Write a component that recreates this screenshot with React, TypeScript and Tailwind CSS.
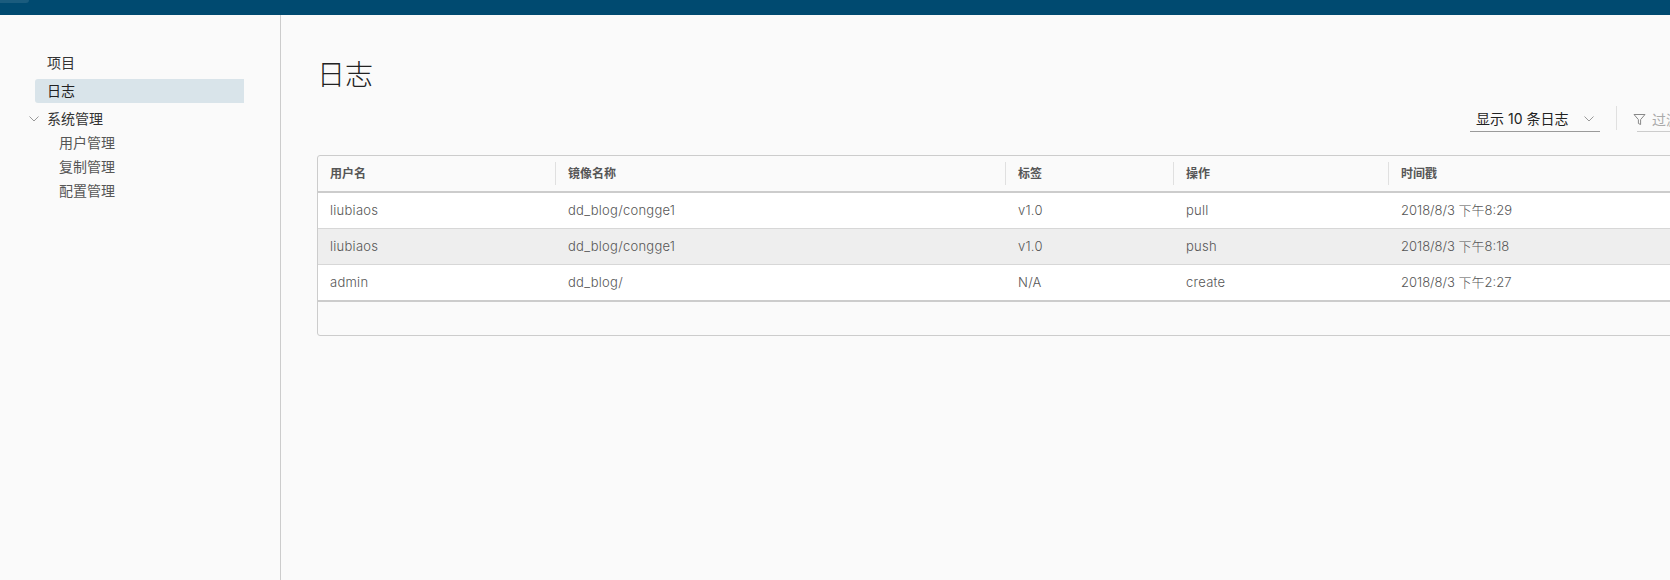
import React from "react";

const rows = [
  { u: "liubiaos", r: "dd_blog/congge1", t: "v1.0", o: "pull", d: "2018/8/3 下午8:29", bg: "bg-white" },
  { u: "liubiaos", r: "dd_blog/congge1", t: "v1.0", o: "push", d: "2018/8/3 下午8:18", bg: "bg-[#eeeeee]" },
  { u: "admin", r: "dd_blog/", t: "N/A", o: "create", d: "2018/8/3 下午2:27", bg: "bg-white" },
];
const cols = ["w-[237px]", "w-[450px]", "w-[168px]", "w-[215px]", "w-[330px]"];
const heads = ["用户名", "镜像名称", "标签", "操作", "时间戳"];

function Chevron({ className }: { className: string }) {
  return (
    <svg className={className} viewBox="0 0 12 8" fill="none" stroke="currentColor" strokeWidth="1">
      <path d="M1.5 1.5 L6 6 L10.5 1.5" />
    </svg>
  );
}

export default function App() {
  return (
    <div className="w-[1670px] h-[580px] overflow-hidden flex flex-col bg-[#fafafa] font-['Inter','Noto_Sans_CJK_SC',sans-serif] text-[#333]">
      <header className="h-[15px] shrink-0 bg-[#004a70] relative">
        <div className="absolute left-0 top-0 w-[29px] h-[3px] rounded-br-[3px] bg-[#1a5c7e]" />
      </header>
      <div className="flex flex-1 min-h-0">
        <aside className="w-[281px] shrink-0 border-r border-[#cccccc] pt-[36px] pl-[35px] text-[14px] leading-[24px]">
          <div className="pl-[12px] h-[24px] text-[#333]">项目</div>
          <div className="mt-[4px] pl-[12px] h-[24px] w-[209px] rounded-l-[3px] bg-[#d9e4ea] text-[#222]">日志</div>
          <div className="mt-[4px] relative pl-[12px] h-[24px] text-[#333]">
            系统管理
            <Chevron className="absolute left-[-7px] top-[8px] w-[12px] h-[8px] text-[#999]" />
          </div>
          <div className="pl-[24px] text-[#565656]">
            <div className="h-[24px]">用户管理</div>
            <div className="h-[24px]">复制管理</div>
            <div className="h-[24px]">配置管理</div>
          </div>
        </aside>
        <main className="flex-1 min-w-0 pl-[36px] overflow-hidden">
          <h1 className="mt-[39px] h-[42px] leading-[42px] text-[28px] font-extralight text-[#222]">日志</h1>
          <div className="mt-[10px] h-[49px] flex items-start">
            <div className="ml-[1153px] w-[130px] h-[26px] border-b border-[#9a9a9a] flex items-center pl-[6px] text-[14px] text-[#222] shrink-0">
              <span>显示 10 条日志</span>
              <Chevron className="ml-[15px] w-[12px] h-[8px] text-[#999]" />
            </div>
            <div className="ml-[16px] w-px h-[24px] bg-[#e0e0e0] shrink-0" />
            <div className="ml-[16px] relative flex items-center shrink-0 h-[26px]">
              <svg className="w-[13px] h-[13px] text-[#888]" viewBox="0 0 13 13" fill="none" stroke="currentColor" strokeWidth="1">
                <path d="M1 1.5 H12 L7.6 6.6 V11.5 L5.4 10.5 V6.6 Z" />
              </svg>
              <span className="ml-[6px] text-[14px] text-[#aaa] w-[30px] overflow-hidden whitespace-nowrap">过滤日志</span>
              <div className="absolute left-[4px] right-0 bottom-0 h-px bg-[#cccccc]" />
            </div>
          </div>
          <div className="w-[1420px] rounded-[3px] border border-[#cccccc] bg-[#fafafa] text-[13px] tracking-[0.02em] font-light">
            <div className="flex h-[37px] pb-[1px] items-center border-b-2 border-[#cccccc] font-bold tracking-normal text-[12px] text-[#565656]">
              {heads.map((h, i) => (
                <div key={h} className={`${cols[i]} shrink-0 h-[23px] leading-[23px] pl-[12px] ${i ? "border-l border-[#e0e0e0]" : ""}`}>
                  {h}
                </div>
              ))}
            </div>
            {rows.map((r, idx) => (
              <div
                key={idx}
                className={`flex ${idx === 2 ? "h-[37px] border-b-2 border-[#cccccc]" : "h-[36px] border-b border-[#d7d7d7]"} items-center ${r.bg} text-[#565656]`}
              >
                {[r.u, r.r, r.t, r.o, r.d].map((c, i) => (
                  <div key={i} className={`${cols[i]} shrink-0 pl-[12px] ${i ? "border-l border-transparent" : ""} ${i === 4 ? "tracking-normal" : ""}`}>
                    {c}
                  </div>
                ))}
              </div>
            ))}
            <div className="h-[33px]" />
          </div>
        </main>
      </div>
    </div>
  );
}
